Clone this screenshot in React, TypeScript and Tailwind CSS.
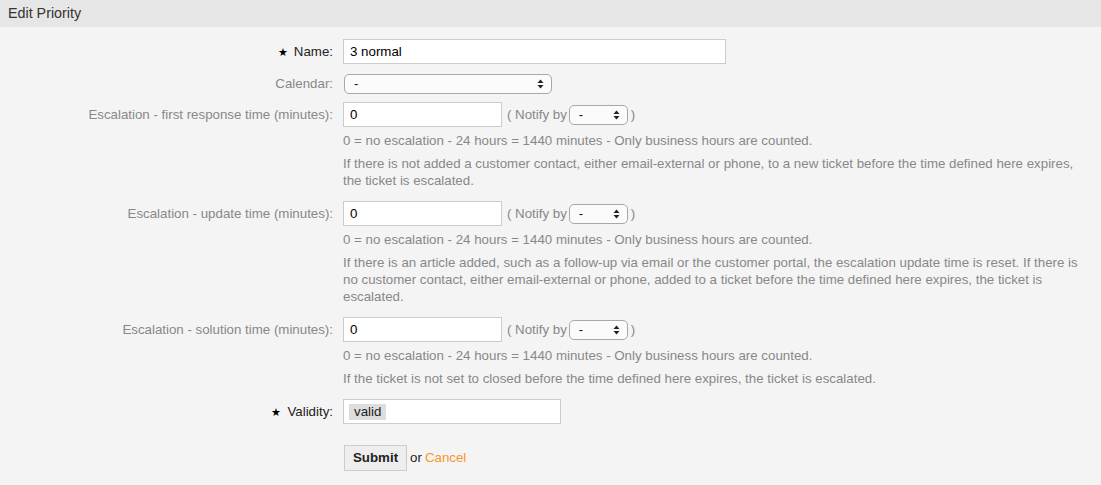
function SelectArrows() {
  return (
    <svg width="7" height="10" viewBox="0 0 7 10" className="shrink-0">
      <path d="M3.5 0.5 L6.5 4 H0.5 Z" fill="#222" />
      <path d="M3.5 9.5 L6.5 6 H0.5 Z" fill="#222" />
    </svg>
  );
}

function FakeSelect({ width }: { width: string }) {
  return (
    <div
      className={`${width} h-[20px] flex items-center justify-between pl-[9px] pr-[7px] rounded-[5px] border border-[#a8a8a8] bg-[#fbfbfb] text-[13px] text-[#111]`}
    >
      <span>-</span>
      <SelectArrows />
    </div>
  );
}

function Label({ text, required }: { text: string; required?: boolean }) {
  return (
    <div
      className={`w-[333px] shrink-0 text-right leading-[25px] ${
        required ? "text-[#222]" : "text-[#888]"
      }`}
    >
      {required && <span className="text-[11px] mr-[6px] text-black">★</span>}
      {text}
    </div>
  );
}

function TextInput({ value, width }: { value: string; width: string }) {
  return (
    <div
      className={`${width} h-[25px] flex items-center px-[6px] bg-white border border-[#cccccc] text-black`}
    >
      {value}
    </div>
  );
}

function EscalationRow({
  label,
  help,
  className,
}: {
  label: string;
  help: string[];
  className: string;
}) {
  return (
    <div className={`flex gap-[10px] ${className}`}>
      <Label text={label} />
      <div className="flex-1">
        <div className="flex items-center">
          <TextInput value="0" width="w-[159px]" />
          <span className="ml-[5px] text-[#888]">( Notify by</span>
          <div className="ml-[2px]">
            <FakeSelect width="w-[59px]" />
          </div>
          <span className="ml-[3px] text-[#888]">)</span>
        </div>
        <p className="mt-[5px] leading-[17px] text-[#888]">
          0 = no escalation - 24 hours = 1440 minutes - Only business hours are counted.
        </p>
        <p className="mt-[6px] leading-[17px] text-[#888]">
          {help.map((line) => (
            <span key={line} className="block whitespace-nowrap">
              {line}
            </span>
          ))}
        </p>
      </div>
    </div>
  );
}

export default function App() {
  return (
    <div className="w-[1101px] h-[485px] bg-[#f4f4f4] text-[13.3px] font-['Liberation_Sans',Arial,sans-serif] overflow-hidden">
      <div className="h-[27px] bg-[#e6e6e6] px-[8px] flex items-center text-[14.3px] text-[#333]">
        Edit Priority
      </div>

      <div className="pt-[12px] pr-[10px]">
        {/* Name */}
        <div className="flex gap-[10px]">
          <Label text="Name:" required />
          <TextInput value="3 normal" width="w-[383px]" />
        </div>

        {/* Calendar */}
        <div className="flex gap-[10px] mt-[9px] items-center">
          <div className="w-[333px] shrink-0 text-right text-[#888]">Calendar:</div>
          <div className="pl-[1px]">
            <FakeSelect width="w-[208px]" />
          </div>
        </div>

        <EscalationRow
          className="mt-[8px]"
          label="Escalation - first response time (minutes):"
          help={[
            "If there is not added a customer contact, either email-external or phone, to a new ticket before the time defined here expires,",
            "the ticket is escalated.",
          ]}
        />

        <EscalationRow
          className="mt-[12px]"
          label="Escalation - update time (minutes):"
          help={[
            "If there is an article added, such as a follow-up via email or the customer portal, the escalation update time is reset. If there is",
            "no customer contact, either email-external or phone, added to a ticket before the time defined here expires, the ticket is",
            "escalated.",
          ]}
        />

        <EscalationRow
          className="mt-[12px]"
          label="Escalation - solution time (minutes):"
          help={[
            "If the ticket is not set to closed before the time defined here expires, the ticket is escalated.",
          ]}
        />

        {/* Validity */}
        <div className="flex gap-[10px] mt-[12px]">
          <Label text="Validity:" required />
          <div className="w-[218px] h-[25px] flex items-center px-[5px] bg-white border border-[#cccccc]">
            <span className="bg-[#dddddd] px-[5px] leading-[16px] text-[#222]">valid</span>
          </div>
        </div>

        {/* Actions */}
        <div className="flex gap-[10px] mt-[20px]">
          <div className="w-[333px] shrink-0" />
          <div className="flex items-center pl-[1px]">
            <button className="h-[26px] px-[8px] bg-[#eeeeee] border border-[#cccccc] font-bold text-[#222]">
              Submit
            </button>
            <span className="ml-[3px] text-[#222]">or</span>
            <a href="#" className="ml-[3px] text-[#f7962b]">
              Cancel
            </a>
          </div>
        </div>
      </div>
    </div>
  );
}
